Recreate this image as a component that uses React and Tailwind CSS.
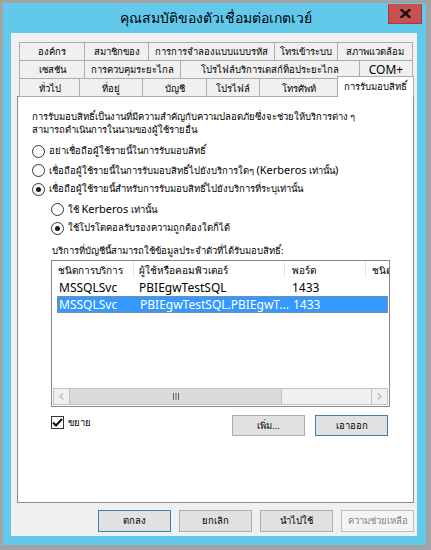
import { ChevronLeft, ChevronRight } from 'lucide-react';

const row1 = [
  ['องค์กร', 'w-[66px] border-l'],
  ['สมาชิกของ', 'w-[64px]'],
  ['การการจำลองแบบแบบรหัส', 'w-[126px]'],
  ['โทรเข้าระบบ', 'w-[63px]'],
  ['สภาพแวดล้อม', 'w-[75px]'],
];

const row2 = [
  ['เซสชัน', 'w-[66px] border-l'],
  ['การควบคุมระยะไกล', 'w-[96px]'],
  ['โปรไฟล์บริการเดสก์ท็อประยะไกล', 'w-[179px]'],
  ['COM+', 'w-[53px] text-[12px]'],
];

const row3 = [
  ['ทั่วไป', 'w-[61px] border-l'],
  ['ที่อยู่', 'w-[63px]'],
  ['บัญชี', 'w-[64px]'],
  ['โปรไฟล์', 'w-[53px]'],
  ['โทรศัพท์', 'w-[78px]'],
];

const Tab = ({ label, cls }) => (
  <div className={`h-[19px] border-t border-r border-b border-[#acacac] bg-[#f0f0f0] flex items-center justify-center leading-none whitespace-nowrap ${cls}`}>
    {label}
  </div>
);

const Radio = ({ checked }) => (
  <span className="w-[13px] h-[13px] shrink-0 rounded-full border border-[#333333] bg-white flex items-center justify-center">
    {checked && <span className="w-[5px] h-[5px] rounded-full bg-[#1a1a1a]" />}
  </span>
);

const Latin = ({ children }) => <span className="text-[11px]">{children}</span>;

const Button = ({ children, kind = 'normal', h = 'h-[21px]' }) => {
  const styles = {
    normal: 'bg-[#e1e1e1] border-[#adadad] text-black',
    focus: 'bg-[#e1e1e1] border-[#3c7fb1] text-black',
    disabled: 'bg-[#f4f4f4] border-[#bfbfbf] text-[#838383]',
  };
  return (
    <div className={`w-[73px] ${h} border flex items-center justify-center leading-none whitespace-nowrap ${styles[kind]}`}>
      {children}
    </div>
  );
};

export default function App() {
  return (
    <div className="w-[431px] h-[550px] bg-[#a3a3a3] pt-[3px] pl-[3px] font-['Noto_Sans','DejaVu_Sans',sans-serif] text-[9.5px] text-black">
      <div className="w-[423px] h-[542px] bg-[#62c9ea] flex flex-col">
        {/* Title bar */}
        <div className="h-[30px] relative flex items-center justify-center">
          <span className="text-[14px] leading-none pl-[3px]">คุณสมบัติของตัวเชื่อมต่อเกตเวย์</span>
          <div className="absolute right-[4px] top-[1px] w-[34px] h-[20px] bg-[#c75050] border border-[#a33d3d] border-t-0 flex items-center justify-center">
            <svg width="11" height="9" viewBox="0 0 11 9">
              <path d="M1.5 1 L9.5 8 M9.5 1 L1.5 8" stroke="#111" strokeWidth="2.4" strokeLinecap="square" />
            </svg>
          </div>
        </div>

        {/* Client */}
        <div className="ml-[8px] w-[406px] h-[503px] bg-[#f0f0f0] pt-[9px] pl-[6px]">
          {/* Tabs */}
          <div className="ml-[2px] flex">
            {row1.map(([l, c]) => <Tab key={l} label={l} cls={c} />)}
          </div>
          <div className="ml-[2px] -mt-px flex">
            {row2.map(([l, c]) => <Tab key={l} label={l} cls={c} />)}
          </div>
          <div className="ml-[2px] -mt-px flex items-end h-[19px] relative z-10">
            {row3.map(([l, c]) => <Tab key={l} label={l} cls={`${c} pt-[2px]`} />)}
            <div className="-ml-px w-[77px] h-[21px] border border-b-0 border-[#acacac] bg-white flex items-center justify-center leading-none whitespace-nowrap">
              การรับมอบสิทธิ์
            </div>
          </div>

          {/* Panel */}
          <div className="-mt-px w-[397px] h-[407px] bg-white border border-[#898c95] pt-[13px] pl-[14px]">
            <div className="leading-[13px] whitespace-nowrap">
              <div>การรับมอบสิทธิ์เป็นงานที่มีความสำคัญกับความปลอดภัยซึ่งจะช่วยให้บริการต่าง ๆ</div>
              <div>สามารถดำเนินการในนามของผู้ใช้รายอื่น</div>
            </div>

            <div className="mt-[6px] flex flex-col whitespace-nowrap">
              <div className="h-[19px] flex items-center gap-[4px]">
                <Radio />
                <span>อย่าเชื่อถือผู้ใช้รายนี้ในการรับมอบสิทธิ์</span>
              </div>
              <div className="h-[19px] flex items-center gap-[4px]">
                <Radio />
                <span>เชื่อถือผู้ใช้รายนี้ในการรับมอบสิทธิ์ไปยังบริการใดๆ <Latin>(Kerberos</Latin> เท่านั้น<Latin>)</Latin></span>
              </div>
              <div className="h-[19px] flex items-center gap-[4px]">
                <Radio checked />
                <span>เชื่อถือผู้ใช้รายนี้สำหรับการรับมอบสิทธิ์ไปยังบริการที่ระบุเท่านั้น</span>
              </div>
              <div className="mt-[1px] ml-[19px] h-[19px] flex items-center gap-[4px]">
                <Radio />
                <span>ใช้ <Latin>Kerberos</Latin> เท่านั้น</span>
              </div>
              <div className="ml-[19px] h-[19px] flex items-center gap-[4px]">
                <Radio checked />
                <span>ใช้โปรโตคอลรับรองความถูกต้องใดก็ได้</span>
              </div>
            </div>

            <div className="mt-[6px] ml-[20px] leading-[13px] whitespace-nowrap">
              บริการที่บัญชีนี้สามารถใช้ข้อมูลประจำตัวที่ได้รับมอบสิทธิ์:
            </div>

            {/* List view */}
            <div className="mt-[3px] ml-[19px] w-[339px] h-[147px] border border-[#828790] bg-white flex flex-col">
              <div className="h-[17px] flex leading-none text-black text-[10px]">
                <div className="w-[82px] border-r border-[#e5e5e5] pl-[6px] flex items-center whitespace-nowrap">ชนิดการบริการ</div>
                <div className="w-[151px] border-r border-[#e5e5e5] pl-[5px] flex items-center whitespace-nowrap">ผู้ใช้หรือคอมพิวเตอร์</div>
                <div className="w-[81px] border-r border-[#e5e5e5] pl-[7px] flex items-center whitespace-nowrap">พอร์ต</div>
                <div className="flex-1 overflow-hidden pl-[6px] flex items-center whitespace-nowrap">ชนิดบริการ</div>
              </div>
              <div className="mt-[1px] ml-[5px] h-[17px] flex items-center leading-none text-[12px]">
                <div className="w-[77px] pl-[2px]">MSSQLSvc</div>
                <div className="w-[151px] pl-[5px] whitespace-nowrap">PBIEgwTestSQL</div>
                <div className="pl-[7px]">1433</div>
              </div>
              <div className="ml-[5px] mr-px h-[17px] flex items-center leading-none text-[12px] bg-[#3399ff] text-white border border-dotted border-[#c8843f]">
                <div className="w-[77px] pl-[1px]">MSSQLSvc</div>
                <div className="w-[151px] pl-[5px] whitespace-nowrap">PBIEgwTestSQL.PBIEgwT...</div>
                <div className="pl-[7px]">1433</div>
              </div>

              {/* Horizontal scrollbar */}
              <div className="mt-auto mb-[1px] mx-[1px] h-[17px] flex border border-[#c2c2c2] bg-[#f0f0f0]">
                <div className="w-[16px] border-r border-[#c2c2c2] flex items-center justify-center text-[#606060]">
                  <ChevronLeft size={11} strokeWidth={1.5} />
                </div>
                <div className="w-[212px] bg-[#dadada] border-r border-[#c2c2c2] flex items-center justify-center">
                  <svg width="8" height="7" viewBox="0 0 8 7">
                    <path d="M1.5 0 V7 M4 0 V7 M6.5 0 V7" stroke="#606060" strokeWidth="1" />
                  </svg>
                </div>
                <div className="flex-1" />
                <div className="w-[16px] border-l border-[#c2c2c2] flex items-center justify-center text-[#606060]">
                  <ChevronRight size={11} strokeWidth={1.5} />
                </div>
              </div>
            </div>

            {/* Checkbox + buttons */}
            <div className="mt-[8px] ml-[19px] w-[339px] flex items-start">
              <div className="mt-[1px] flex items-center gap-[4px]">
                <span className="w-[13px] h-[13px] border border-[#333333] bg-white flex items-center justify-center">
                  <svg width="11" height="9" viewBox="0 0 11 9">
                    <path d="M1 4.5 L4 7.5 L10 1" fill="none" stroke="#111" strokeWidth="2" />
                  </svg>
                </span>
                <span className="leading-none">ขยาย</span>
              </div>
              <div className="ml-auto mr-[2px] flex gap-[10px]">
                <Button>เพิ่ม...</Button>
                <Button kind="focus">เอาออก</Button>
              </div>
            </div>
          </div>

          {/* Dialog buttons */}
          <div className="mt-[7px] w-[397px] flex justify-end gap-[8px]">
            <Button kind="focus" h="h-[22px]">ตกลง</Button>
            <Button h="h-[22px]">ยกเลิก</Button>
            <Button h="h-[22px]">นำไปใช้</Button>
            <Button kind="disabled" h="h-[22px]">ความช่วยเหลือ</Button>
          </div>
        </div>
      </div>
    </div>
  );
}
